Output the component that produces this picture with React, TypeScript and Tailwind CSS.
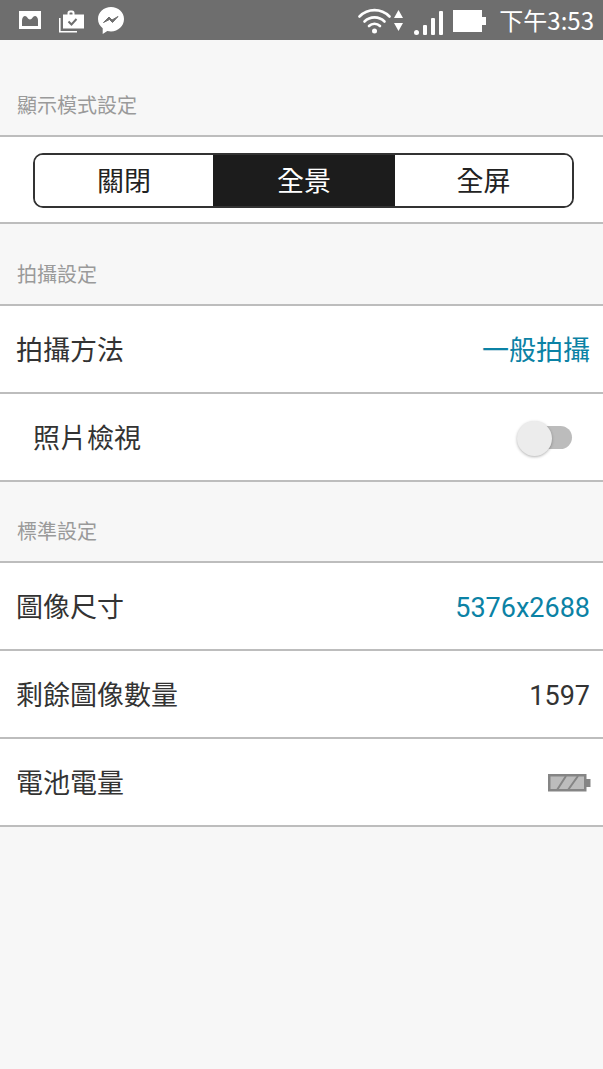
const font = { fontFamily: '"Noto Sans CJK TC", Roboto, sans-serif' };
const digits = { fontFamily: "Roboto, sans-serif" };

function StatusBar() {
  return (
    <div className="h-10 bg-[#6e6e6e] flex items-center justify-between pl-[19px] pr-[9px] shrink-0">
      <div className="flex items-center">
        <svg width="22" height="18" viewBox="0 0 22 18">
          <rect width="22" height="18" fill="#fff" />
          <path d="M3 15V9.500C3 7 4.500 5 6 5c2 0 3 3.500 5 3.500S14 5 16 5c1.500 0 3 2 3 4v6z" fill="#6e6e6e" />
        </svg>
        <svg className="ml-[18px] mt-[2px]" width="25" height="23" viewBox="0 0 25 23" fill="none">
          <path d="M0.800 8v13.700H18" stroke="#fff" strokeWidth="1.600" />
          <path fillRule="evenodd" d="M4 4.500h4.500V3a2.500 2.500 0 0 1 2.500-2.500h2A2.500 2.500 0 0 1 15.500 3v1.500H25v14H4z M10.500 4.500h3V3a.6.6 0 0 0-.6-.6h-1.800a.6.6 0 0 0-.6.6z" fill="#fff" />
          <path d="M9.500 11.500l3 3 5-5.500" stroke="#6e6e6e" strokeWidth="2" />
        </svg>
        <svg className="ml-[14px]" width="26" height="27" viewBox="0 0 26 27">
          <path d="M13 0C5.800 0 0 5.400 0 12c0 3.700 1.800 7 4.700 9.200V27l4.600-3.100c1.200.3 2.400.5 3.700.5 7.200 0 13-5.400 13-12.400C26 5.400 20.200 0 13 0z" fill="#fff" />
          <path d="M5.500 15.500l5.500-5.500 3 3 6-3.500-5.500 6-3-3z" stroke="#6e6e6e" strokeWidth="1" fill="#6e6e6e" />
        </svg>
      </div>
      <div className="flex items-center">
        <svg width="33" height="27" viewBox="0 0 33 27" fill="none" stroke="#fff" strokeWidth="2.600" strokeLinecap="round">
          <path d="M1.500 9.500C10 1 23 1 31.500 9.500" />
          <path d="M6.500 14.500C12 9 21 9 26.500 14.500" />
          <path d="M11 19C14 16 19 16 22 19" />
          <circle cx="16.500" cy="24" r="2.500" fill="#fff" stroke="none" />
        </svg>
        <svg className="ml-[3px]" width="9" height="21" viewBox="0 0 9 21" fill="#fff">
          <path d="M4.500 0l4.500 8H0z" />
          <path d="M4.500 21l4.500-8H0z" />
        </svg>
        <svg className="ml-[11px] mt-[6px]" width="29" height="24" viewBox="0 0 29 24" fill="#fff">
          <circle cx="2.500" cy="21.500" r="2.500" />
          <rect x="9" y="14" width="4" height="10" rx="1" />
          <rect x="17" y="7" width="4" height="17" rx="1" />
          <rect x="25" y="0" width="4" height="24" rx="1" />
        </svg>
        <svg className="ml-[10px] mt-[2px]" width="33" height="22" viewBox="0 0 33 22" fill="#fff">
          <rect x="0" y="0" width="29" height="22" />
          <rect x="29" y="7" width="4" height="8" />
        </svg>
        <span className="ml-[13px] text-[24px] leading-none text-white" style={font}>下午3:53</span>
      </div>
    </div>
  );
}

function SectionHeader({ label, h }: { label: string; h: string }) {
  return (
    <div className={`${h} flex items-end pl-[17px] pb-[17px] text-[20px] leading-[26px] text-[#9a9a9a]`}>
      {label}
    </div>
  );
}

function Row({ label, children, indent }: { label: string; children?: React.ReactNode; indent?: boolean }) {
  return (
    <div className={`h-[88px] bg-white border-b-2 border-[#bdbdbd] flex items-center justify-between pb-[1px] pr-[13px] ${indent ? "pl-[33px]" : "pl-[16px]"}`}>
      <span className="text-[27px] leading-none text-[#333]">{label}</span>
      {children}
    </div>
  );
}

function BatteryIcon() {
  return (
    <svg width="43" height="18" viewBox="0 0 43 18" className="-mr-px mt-[2px]">
      <rect x="1.250" y="1.250" width="36" height="15" fill="#bcbcbc" stroke="#858585" strokeWidth="2.500" />
      <rect x="38" y="5" width="4.500" height="8" fill="#858585" />
      <path d="M9 16L18 2M20 16L30 2" stroke="#858585" strokeWidth="2" />
    </svg>
  );
}

function Toggle() {
  return (
    <div className="relative w-[55px] h-[23px] mr-[18px] mt-[2px]">
      <div className="absolute right-0 top-0 w-[40px] h-[23px] rounded-full bg-[#bcbcbc]" />
      <div className="absolute left-0 top-[-5px] w-[35px] h-[35px] rounded-full bg-[#ececec] shadow-[0_1px_3px_rgba(0,0,0,0.3)]" />
    </div>
  );
}

export default function App() {
  return (
    <div className="w-[603px] h-[1069px] bg-[#f7f7f7] flex flex-col overflow-hidden" style={font}>
      <StatusBar />
      <SectionHeader label="顯示模式設定" h="h-[95px]" />
      <div className="h-[89px] bg-white border-y-2 border-[#bdbdbd] flex items-center justify-center pt-[2px] pl-[4px]">
        <div className="w-[541px] h-[55px] rounded-[10px] border-2 border-[#333] overflow-hidden flex text-[27px]">
          <div className="w-[178px] flex items-center justify-center text-[#222] bg-white">關閉</div>
          <div className="w-[182px] flex items-center justify-center text-white bg-[#1c1c1c]">全景</div>
          <div className="flex-1 flex items-center justify-center text-[#222] bg-white">全屏</div>
        </div>
      </div>
      <SectionHeader label="拍攝設定" h="h-[80px]" />
      <div className="border-t-2 border-[#bdbdbd]">
        <Row label="拍攝方法">
          <span className="text-[27px] leading-none text-[#0b82a5]">一般拍攝</span>
        </Row>
        <Row label="照片檢視" indent>
          <Toggle />
        </Row>
      </div>
      <SectionHeader label="標準設定" h="h-[79px]" />
      <div className="border-t-2 border-[#bdbdbd]">
        <Row label="圖像尺寸">
          <span className="mt-[6px] text-[27px] leading-none text-[#0b82a5]" style={digits}>5376x2688</span>
        </Row>
        <Row label="剩餘圖像數量">
          <span className="mt-[6px] text-[27px] leading-none text-[#333]" style={digits}>1597</span>
        </Row>
        <Row label="電池電量">
          <BatteryIcon />
        </Row>
      </div>
    </div>
  );
}
